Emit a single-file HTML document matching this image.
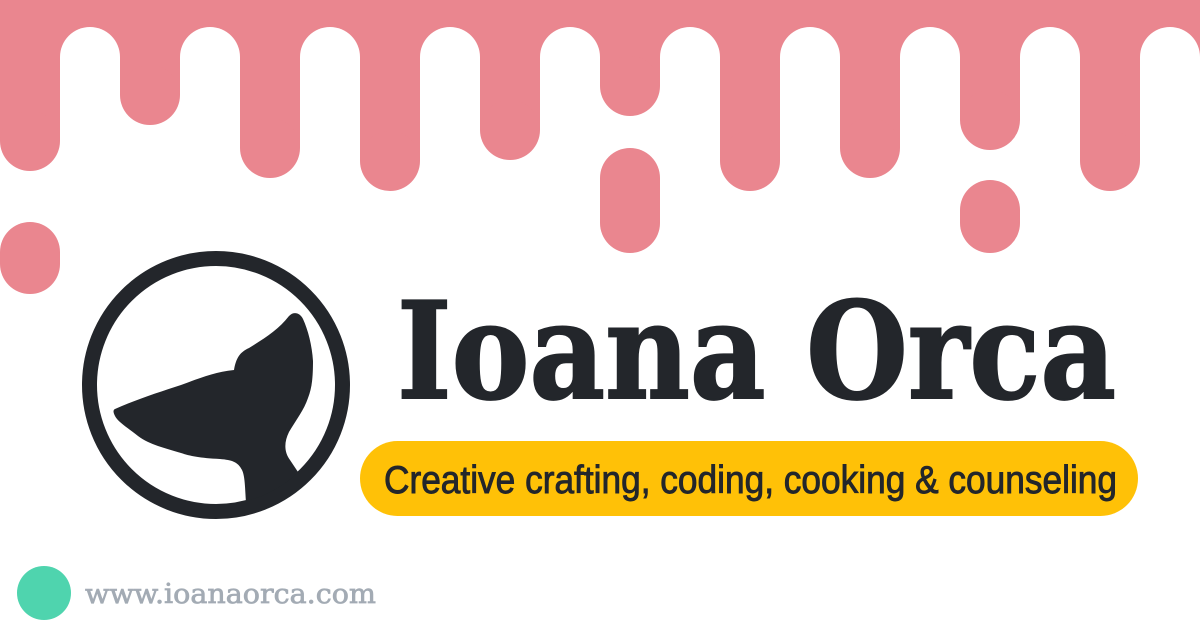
<!DOCTYPE html>
<html><head><meta charset="utf-8"><style>html,body{margin:0;padding:0;background:#fff}svg{display:block}</style></head>
<body>
<svg width="1200" height="630" viewBox="0 0 1200 630" xmlns="http://www.w3.org/2000/svg">
<rect width="1200" height="630" fill="#fff"/>
<g fill="#EA868F">
<rect x="0" y="0" width="1200" height="57"/>
<rect x="0" y="0" width="60" height="141"/><circle cx="30" cy="141" r="30"/>
<rect x="120" y="0" width="60" height="95"/><circle cx="150" cy="95" r="30"/>
<rect x="240" y="0" width="60" height="148"/><circle cx="270" cy="148" r="30"/>
<rect x="360" y="0" width="60" height="161"/><circle cx="390" cy="161" r="30"/>
<rect x="480" y="0" width="60" height="130"/><circle cx="510" cy="130" r="30"/>
<rect x="600" y="0" width="60" height="86"/><circle cx="630" cy="86" r="30"/>
<rect x="720" y="0" width="60" height="161"/><circle cx="750" cy="161" r="30"/>
<rect x="840" y="0" width="60" height="148"/><circle cx="870" cy="148" r="30"/>
<rect x="960" y="0" width="60" height="120"/><circle cx="990" cy="120" r="30"/>
<rect x="1080" y="0" width="60" height="161"/><circle cx="1110" cy="161" r="30"/>
<rect x="0" y="222" width="60" height="72" rx="30"/>
<rect x="600" y="148" width="60" height="105" rx="30"/>
<rect x="960" y="180" width="60" height="73" rx="30"/>
</g>
<g fill="#fff">
<circle cx="90" cy="57" r="30"/><circle cx="210" cy="57" r="30"/><circle cx="330" cy="57" r="30"/><circle cx="450" cy="57" r="30"/><circle cx="570" cy="57" r="30"/><circle cx="690" cy="57" r="30"/><circle cx="810" cy="57" r="30"/><circle cx="930" cy="57" r="30"/><circle cx="1050" cy="57" r="30"/><circle cx="1170" cy="57" r="30"/>
<rect x="1140" y="57" width="60" height="40"/>
</g>
<defs><clipPath id="c"><circle cx="216" cy="385" r="120"/></clipPath></defs>
<circle cx="216" cy="385" r="126.5" fill="none" stroke="#23262B" stroke-width="15"/>
<path clip-path="url(#c)" fill="#23262B" d="M115 409 C140 398 160 392 181 385 C200 378 215 372 234 370 C236 358 240 352 249 348 C265 338 278 330 289 316 C294 311 300 313 303 319 C308 330 312 345 313 361 C313 377 312 388 308 398 C304 410 296 420 289 432 C284 442 284 452 290 460 L310 490 L250 520 L246 502 C245 488 245 476 242 470 C238 462 232 460 220 459 C200 458 190 456 181 453 C165 448 150 445 138 436 C128 428 118 422 115 416 C113 412 113 410 115 409 Z"/>
<text x="397" y="398" font-family="'DejaVu Serif', serif" font-weight="bold" font-size="134" fill="#23262B" stroke="#23262B" stroke-width="2" textLength="719" lengthAdjust="spacingAndGlyphs">Ioana Orca</text>
<rect x="360" y="441" width="778" height="75" rx="37.5" fill="#FFC107"/>
<text x="384" y="493" font-family="'Liberation Sans Narrow','Liberation Sans',sans-serif" font-size="39" fill="#23262B" stroke="#23262B" stroke-width="0.9" textLength="733" lengthAdjust="spacingAndGlyphs">Creative crafting, coding, cooking &amp; counseling</text>
<circle cx="44" cy="593" r="27" fill="#4FD4AE"/>
<text x="85" y="603" font-family="'DejaVu Serif', serif" font-size="27" fill="#A3ABB4" stroke="#A3ABB4" stroke-width="0.7" textLength="291" lengthAdjust="spacingAndGlyphs">www.ioanaorca.com</text>
</svg>
</body></html>
